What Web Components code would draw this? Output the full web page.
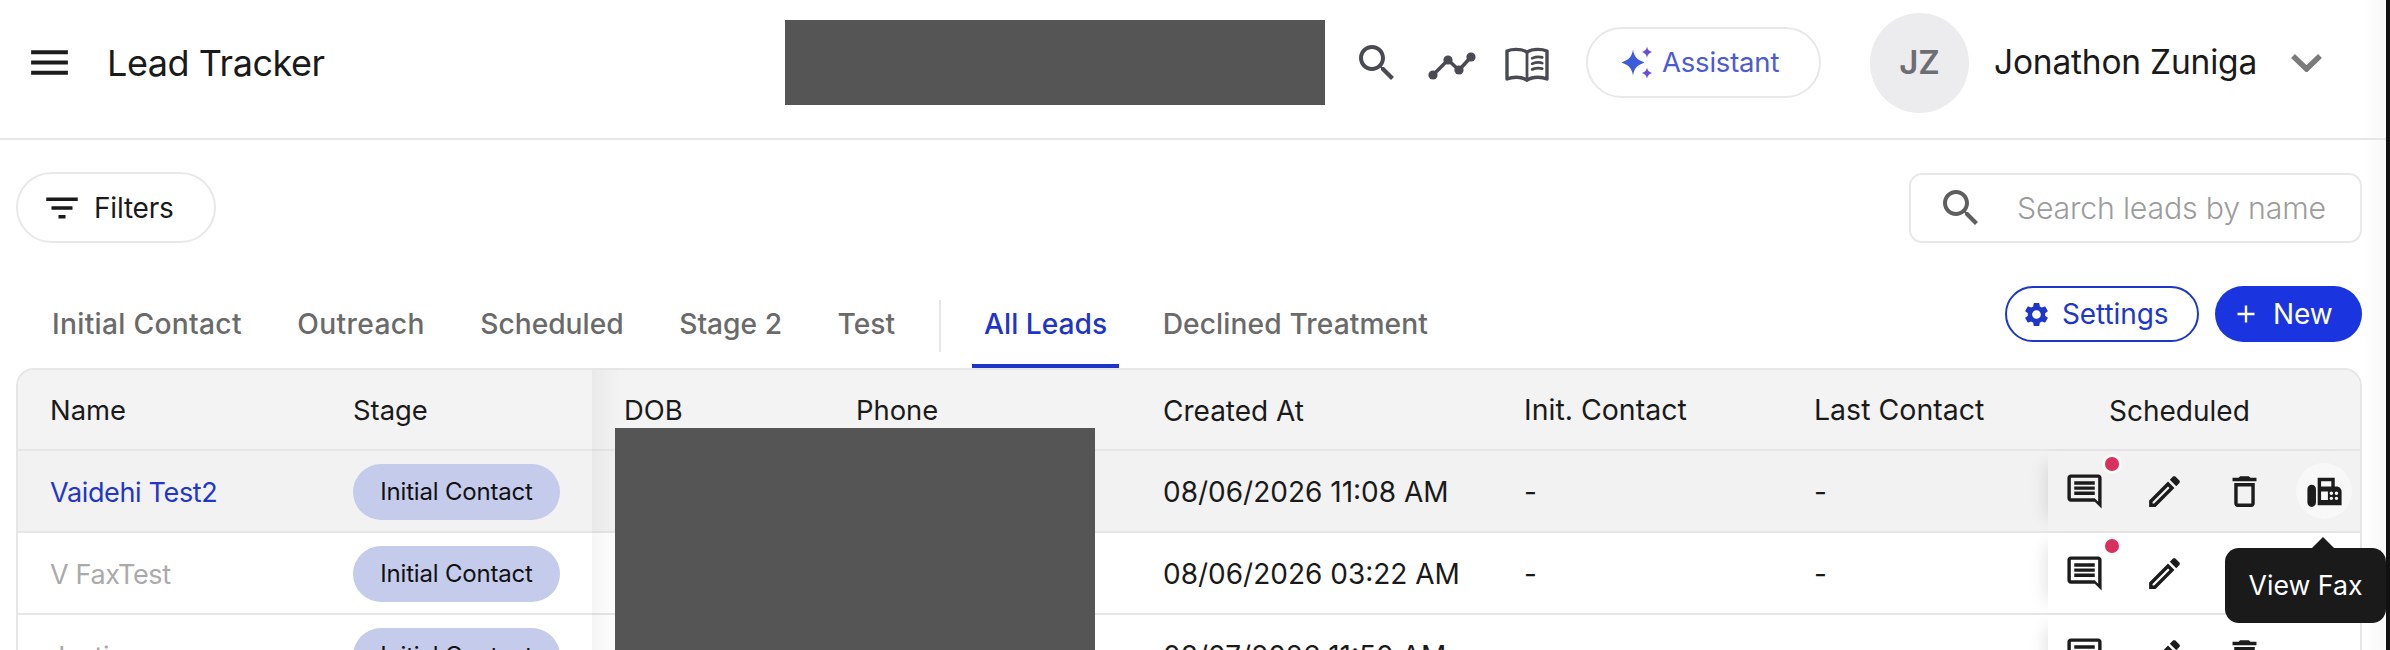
<!DOCTYPE html>
<html lang="en"><head><meta charset="utf-8"><title>Lead Tracker</title>
<style>
html,body{margin:0;padding:0;background:#111;height:650px;overflow:hidden}
body{font-family:Inter,"Liberation Sans",sans-serif;color:#1a1a1a}
</style></head>
<body>
<lead-app>
  <app-header title-text="Lead Tracker" user="Jonathon Zuniga" initials="JZ"></app-header>
  <lead-toolbar></lead-toolbar>
  <stage-tabs></stage-tabs>
  <lead-table>
    <lead-row name="Vaidehi Test2" date="08/06/2026 11:08 AM" state="hover"></lead-row>
    <lead-row name="V FaxTest" date="08/06/2026 03:22 AM"></lead-row>
    <lead-row name="Justin" date="08/07/2026 11:50 AM" nodot></lead-row>
  </lead-table>
</lead-app>
<script>
const I={
 menu:'<path d="M3 18h18v-2H3v2zm0-5h18v-2H3v2zm0-7v2h18V6H3z"/>',
 filter:'<path d="M10 18h4v-2h-4v2zM3 6v2h18V6H3zm3 7h12v-2H6v2z"/>',
 search:'<path d="M15.5 14h-.79l-.28-.27C15.41 12.59 16 11.11 16 9.5 16 5.91 13.09 3 9.5 3S3 5.91 3 9.5 5.91 16 9.5 16c1.61 0 3.09-.59 4.23-1.57l.27.28v.79l5 4.99L20.49 19l-4.99-5zm-6 0C7.01 14 5 11.99 5 9.5S7.01 5 9.5 5 14 7.01 14 9.5 11.99 14 9.5 14z"/>',
 gear:'<path d="M19.14 12.94c.04-.3.06-.61.06-.94 0-.32-.02-.64-.07-.94l2.03-1.58c.18-.14.23-.41.12-.61l-1.92-3.32c-.12-.22-.37-.29-.59-.22l-2.39.96c-.5-.38-1.03-.7-1.62-.94l-.36-2.54c-.04-.24-.24-.41-.48-.41h-3.84c-.24 0-.43.17-.47.41l-.36 2.54c-.59.24-1.13.57-1.62.94l-2.39-.96c-.22-.08-.47 0-.59.22L2.74 8.87c-.12.21-.08.47.12.61l2.03 1.58c-.05.3-.09.63-.09.94s.02.64.07.94l-2.03 1.58c-.18.14-.23.41-.12.61l1.92 3.32c.12.22.37.29.59.22l2.39-.96c.5.38 1.03.7 1.62.94l.36 2.54c.05.24.24.41.48.41h3.84c.24 0 .44-.17.47-.41l.36-2.54c.59-.24 1.13-.56 1.62-.94l2.39.96c.22.08.47 0 .59-.22l1.92-3.32c.12-.22.07-.47-.12-.61l-2.01-1.58zM12 15.6c-1.98 0-3.6-1.62-3.6-3.6s1.62-3.6 3.6-3.6 3.6 1.62 3.6 3.6-1.62 3.6-3.6 3.6z"/>',
 chat:'<g transform="matrix(-1 0 0 1 24 0)"><path d="M20 2H4c-1.1 0-2 .9-2 2v18l4-4h14c1.1 0 2-.9 2-2V4c0-1.1-.9-2-2-2zm0 14H6l-2 2V4h16v12z"/><path d="M6 6h12v2H6zM6 9h12v2H6zM6 12h12v2H6z"/></g>',
 edit:'<path d="M14.06 9.02l.92.92L5.92 19H5v-.92l9.06-9.06M17.66 3c-.25 0-.51.1-.7.29l-1.83 1.83 3.75 3.75 1.83-1.83c.39-.39.39-1.02 0-1.41l-2.34-2.34c-.2-.2-.45-.29-.71-.29zm-3.6 3.19L3 17.25V21h3.75L17.81 9.94l-3.75-3.75z"/>',
 trash:'<path d="M16 9v10H8V9h8m-1.5-6h-5l-1 1H5v2h14V4h-3.5l-1-1zM18 7H6v12c0 1.1.9 2 2 2h8c1.1 0 2-.9 2-2V7z"/>',
 fax:'<path d="M19 9h-1V4H8v16h14v-8c0-1.66-1.34-3-3-3zm-9-3h6v3h-6V6zm4 11h-4v-5h4v5zm2 0c-.55 0-1-.45-1-1s.45-1 1-1 1 .45 1 1-.45 1-1 1zm0-3c-.55 0-1-.45-1-1s.45-1 1-1 1 .45 1 1-.45 1-1 1zm3 3c-.55 0-1-.45-1-1s.45-1 1-1 1 .45 1 1-.45 1-1 1zm0-3c-.55 0-1-.45-1-1s.45-1 1-1 1 .45 1 1-.45 1-1 1z"/><path d="M4.5 8C3.12 8 2 9.12 2 10.5v8C2 19.88 3.12 21 4.5 21S7 19.88 7 18.5v-8C7 9.12 5.88 8 4.5 8z"/>'
};
const ic=(n,s)=>`<svg width="${s}" height="${s}" viewBox="0 0 24 24" fill="currentColor" aria-hidden="true">${I[n]}</svg>`;
function def(tag,html){customElements.define(tag,class extends HTMLElement{
  constructor(){super();this.attachShadow({mode:'open'});}
  connectedCallback(){this.shadowRoot.innerHTML=typeof html==='function'?html(this):html;}
});}

def('lead-app',`<style>
:host{display:flex;flex-direction:column;width:2386px;height:650px;overflow:hidden;background:linear-gradient(to right,#fff 2362px,#f8f8f8 2386px)}
</style><slot></slot>`);

def('app-header',h=>`<style>
:host{display:flex;align-items:center;box-sizing:border-box;height:140px;padding-bottom:13px;border-bottom:2px solid #e6e6e6;flex:none;color:#1a1a1a}
.left{display:flex;align-items:center;width:785px;flex:none;padding-left:25px;box-sizing:border-box}
.menu{display:flex;color:#1c1c1c}
h1{margin:0 0 0 33px;font:400 36px/1 Inter,sans-serif;letter-spacing:-.45px}
.red{width:540px;height:85px;background:#555;flex:none}
.ic{display:flex;color:#4a4a55;flex:none}
.pill{display:flex;align-items:center;box-sizing:border-box;width:235px;height:71px;border:2px solid #e8e8e8;border-radius:36px;margin-left:35px;padding-left:32px;color:#4a5bd4;font:400 27.5px/1 Inter,sans-serif;letter-spacing:-.2px;gap:8px;flex:none}
.av{width:99px;height:100px;border-radius:50%;background:#ececee;color:#6d6d74;display:grid;place-items:center;font:600 33px/1 Inter,sans-serif;margin-left:49px;flex:none}
.nm{margin-left:25px;font:400 33.5px/1 Inter,sans-serif;width:297px;flex:none;letter-spacing:-.2px}
</style>
<div class="left"><span class="menu">${ic('menu',49)}</span><h1>${h.getAttribute('title-text')}</h1></div>
<div class="red"></div>
<span class="ic" style="margin-left:28px">${ic('search',48)}</span>
<span class="ic" style="margin-left:24px"><svg width="56" height="48" viewBox="0 0 56 48" fill="none" stroke="currentColor" stroke-width="3.6" stroke-linejoin="round"><polyline points="8,36 23,21 34,31 46,18"/><g fill="currentColor" stroke="none"><circle cx="8" cy="36" r="4.6"/><circle cx="23" cy="21" r="4.6"/><circle cx="34" cy="31" r="4.6"/><circle cx="46" cy="18" r="4.6"/></g></svg></span>
<span class="ic" style="margin-left:22px"><svg width="48" height="48" viewBox="0 0 24 24" fill="none" stroke="currentColor" stroke-width="1.7" stroke-linejoin="round" stroke-linecap="round"><path d="M12 6.6C10.6 5.6 8.5 5.2 6.6 5.2 4.8 5.2 3.2 5.5 2 6v14c1.4-.6 3-.9 4.6-.9 2 0 4 .5 5.4 1.5 1.4-1 3.4-1.5 5.4-1.5 1.6 0 3.2.3 4.6.9V6c-1.2-.5-2.8-.8-4.6-.8-1.9 0-4 .4-5.4 1.4z"/><path d="M12 6.6v14" stroke-width="1.4"/><path d="M14.6 9.6c1.7-.7 3.7-.8 5 -.4M14.6 12.4c1.7-.7 3.7-.8 5-.4M14.6 15.2c1.7-.7 3.7-.8 5-.4" stroke-width="1.4"/></svg></span>
<div class="pill"><svg width="34" height="34" viewBox="0 0 34 34" style="flex:none"><path d="M13 3.500c1.200 7 3.600 10 11.500 13-7.900 3-10.300 6-11.500 13-1.200-7-3.600-10-11.500-13 7.900-3 10.300-6 11.500-13z" fill="#3f5bdd"/><path d="M27 .500c.6 3 1.700 4.200 5 5.600-3.300 1.400-4.400 2.600-5 5.600-.6-3-1.700-4.200-5-5.600 3.300-1.400 4.400-2.600 5-5.600zM27 21.500c.6 3 1.700 4.200 5 5.600-3.300 1.400-4.400 2.600-5 5.600-.6-3-1.700-4.200-5-5.600 3.300-1.400 4.400-2.600 5-5.600z" fill="#6a4fd8"/></svg><span>Assistant</span></div>
<div class="av">${h.getAttribute('initials')}</div>
<div class="nm">${h.getAttribute('user')}</div>
<svg width="31" height="18" viewBox="0 0 31 18" fill="none" stroke="#7a7a7a" stroke-width="5.500" style="flex:none"><polyline points="2,2 15.500,15 29,2"/></svg>`);

def('lead-toolbar',`<style>
:host{display:flex;justify-content:space-between;align-items:center;height:71px;margin-top:32px;padding:0 24px 0 16px;flex:none}
.f{display:flex;align-items:center;box-sizing:border-box;width:200px;height:71px;border:2px solid #e8e8e8;border-radius:36px;padding-left:23px;gap:11px;font:400 28px/1 Inter,sans-serif;color:#1a1a1a;letter-spacing:-.2px}
.s{display:flex;align-items:center;box-sizing:border-box;width:453px;height:70px;border:2px solid #e8e8e8;border-radius:13px;padding-left:26px;gap:32px;color:#5f5f5f}
.s input{border:0;outline:0;background:transparent;font:300 30.3px/1 Inter,sans-serif;color:#999;width:320px;padding:0;letter-spacing:-.2px}
.s input::placeholder{color:#9c9c9c;opacity:1}
svg{flex:none}
</style>
<div class="f">${ic('filter',42)}<span>Filters</span></div>
<div class="s">${ic('search',48)}<input placeholder="Search leads by name" aria-label="Search leads by name"></div>`);

def('stage-tab',`<style>
:host{display:flex;align-items:center;box-sizing:border-box;height:125px;padding:37px 12px 0;font:500 28.2px/1 Inter,sans-serif;color:#6a6a6a;white-space:nowrap;position:relative;flex:none}
:host([active]){color:#1f35c8}
:host([active])::after{content:"";position:absolute;left:0;right:0;bottom:0;height:4px;background:#1f35c8}
</style><slot></slot>`);

def('pill-btn',`<style>
:host{display:flex;align-items:center;box-sizing:border-box;height:56px;border-radius:28px;font:400 28px/1 Inter,sans-serif;letter-spacing:-.1px;white-space:nowrap;flex:none}
:host([kind=out]){width:194px;border:2px solid #1e37c9;color:#1e37c9;padding-left:15px;gap:11px}
:host([kind=fill]){width:147px;background:#1a35e0;color:#fff;padding-left:21px;gap:17px;margin-left:16px}
</style><slot></slot>`);

def('stage-tabs',`<style>
:host{display:flex;align-items:flex-end;height:125px;padding:0 24px 0 40px;flex:none}
.t{display:flex;gap:31.500px;flex:1}
.d{width:2px;background:#e6e6e6;height:52px;align-self:flex-start;margin:57px 0 0 0;flex:none}
.b{display:flex;align-self:flex-start;margin-top:43px}
</style>
<div class="t">
<stage-tab style="letter-spacing:.3px">Initial Contact</stage-tab><stage-tab style="letter-spacing:.35px">Outreach</stage-tab><stage-tab>Scheduled</stage-tab><stage-tab>Stage 2</stage-tab><stage-tab>Test</stage-tab>
<span class="d"></span>
<stage-tab active>All Leads</stage-tab><stage-tab style="letter-spacing:.1px">Declined Treatment</stage-tab>
</div>
<div class="b"><pill-btn kind="out">${ic('gear',29)}<span>Settings</span></pill-btn><pill-btn kind="fill"><svg width="20" height="20" viewBox="0 0 20 20" stroke="#fff" stroke-width="2.400"><path d="M10 1.500v17M1.500 10h17"/></svg><span>New</span></pill-btn></div>`);

const cols='303px 271px 232px 307px 361px 290px 295px 251px';
def('lead-table',`<style>
:host{display:block;position:relative;margin:0 24px 0 16px;border:2px solid #e6e6e6;border-bottom:0;border-radius:18px 18px 0 0;flex:none;height:300px;box-sizing:border-box}
.head{display:grid;grid-template-columns:${cols};padding:2px 0 0 32px;height:77px;align-items:center;background:#f3f3f3;border-bottom:2px solid #e6e6e6;border-radius:16px 16px 0 0;font:400 28px/1 Inter,sans-serif}
.s{font-size:27.4px}.l{font-size:28.5px}
.sh{position:absolute;left:574px;top:0;width:28px;height:100%;background:linear-gradient(to right,rgba(0,0,0,.04),transparent);pointer-events:none;z-index:4}
.red{position:absolute;left:597px;top:58px;width:480px;height:300px;background:#555;z-index:5}
</style>
<div class="head"><span class="s">Name</span><span class="s">Stage</span><span class="s">DOB</span><span class="s">Phone</span><span>Created At</span><span class="l">Init. Contact</span><span class="l">Last Contact</span><span>Scheduled</span></div>
<slot></slot><div class="sh"></div><div class="red"></div>`);

def('lead-row',h=>{const hov=h.getAttribute('state')==='hover';const dot=!h.hasAttribute('nodot');return `<style>
:host{display:grid;grid-template-columns:${cols};padding:2px 0 0 32px;height:78px;align-items:center;background:${hov?'#f2f2f3':'#fff'};border-bottom:2px solid #e6e6e6;font:400 28px/1 Inter,sans-serif;position:relative;${hov?'z-index:3;':''}}
.n{color:${hov?'#2236c9':'#aaa'};font-size:27px;letter-spacing:-.35px}
.p{display:grid;place-items:center;width:207px;height:56px;border-radius:28px;background:#c5cbeb;color:#111;font-size:24px;letter-spacing:-.2px}
.a{position:absolute;left:2030px;right:0;top:0;bottom:0;display:flex;align-items:center;gap:39px;padding-left:15.500px;background:inherit;box-shadow:-14px 0 16px -12px rgba(0,0,0,.12);color:#1c1c1c}
.c{position:relative;width:41px;height:41px;display:block}
.dot{position:absolute;left:41px;top:-13.500px;width:14px;height:14px;border-radius:50%;background:#d9305f;box-shadow:0 0 0 3px rgba(255,255,255,.7)}
.on::before{content:"";position:absolute;left:-7.500px;top:-7.500px;width:56px;height:56px;border-radius:50%;background:#f8f8f8}
.c svg{position:relative}
.tip{position:absolute;left:-78.500px;top:77.500px;width:161px;height:75px;border-radius:14px;background:#1a1a1a;color:#fff;display:grid;place-items:center;font-size:26.700px;z-index:4}
.tip::before{content:"";position:absolute;right:52px;top:-11px;border:11px solid transparent;border-top:0;border-bottom-color:#1a1a1a}
</style>
<span class="n">${h.getAttribute('name')}</span><span class="p">Initial Contact</span><span></span><span></span><span>${h.getAttribute('date')}</span><span>-</span><span>-</span><span></span>
<div class="a"><span class="c">${ic('chat',41)}${dot?'<span class="dot"></span>':''}</span><span class="c">${ic('edit',41)}</span><span class="c">${ic('trash',41)}</span>${hov?`<span class="c on">${ic('fax',41)}<span class="tip">View Fax</span></span>`:''}</div>`});
</script>
</body></html>
